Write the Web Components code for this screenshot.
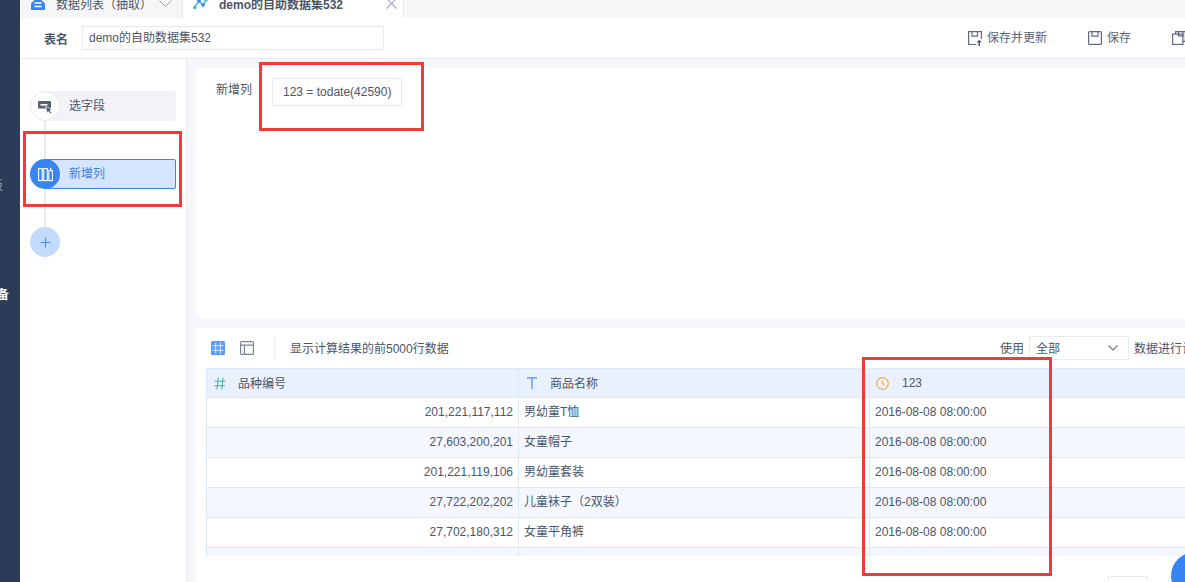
<!DOCTYPE html>
<html lang="zh">
<head>
<meta charset="utf-8">
<title>demo的自助数据集532</title>
<style>
  html, body { margin: 0; height: 582px; overflow: hidden; background: #fff; }
  body { font: 12px "Liberation Sans", "Noto Sans CJK SC", sans-serif; color: #4c5568; }
</style>
</head>
<body>
<bi-app></bi-app>
<script>
// --- Helper to define components quickly ---
function createComponent(tag, template) {
  customElements.define(tag, class extends HTMLElement {
    constructor() {
      super();
      this.attachShadow({ mode: 'open' }).innerHTML = template;
    }
  });
}

const Icons = {
  home: `<svg width="14" height="14" viewBox="0 0 14 14"><path d="M4 3.500H10L14 7.500V14H0V7.500Z" fill="#3685f2"/><path d="M3.500 7h7M3.500 10.500h7" stroke="#fff" stroke-width="1.300"/></svg>`,
  chart: `<svg width="15" height="14" viewBox="0 0 15 14" fill="none"><path d="M1.500 11.500 6 5 10 9 13.500 3.500" stroke="#3fb8d8" stroke-width="1.500"/><circle cx="1.800" cy="11.500" r="1.800" fill="#35c2b0"/><circle cx="6" cy="5" r="1.800" fill="#3685f2"/><circle cx="10" cy="9" r="1.800" fill="#3685f2"/><circle cx="13.200" cy="3.500" r="1.800" fill="#35c2b0"/></svg>`,
  chevron: `<svg width="13" height="7" viewBox="0 0 13 7" fill="none"><path d="M.5.5 6.500 6.500 12.500.5" stroke="#9aa2b1"/></svg>`,
  close: `<svg width="11" height="11" viewBox="0 0 11 11" fill="none"><path d="M.5.5l10 10M10.500.5l-10 10" stroke="#a3aab7" stroke-width="1.100"/></svg>`,
  saveUpdate: `<svg width="14" height="15" viewBox="0 0 14 15" fill="none"><path d="M8.500 13.500H.6V.6h12.800V8" stroke="#5f6a7e" stroke-width="1.200"/><path d="M4 1v4.200h5.500V1" stroke="#5f6a7e" stroke-width="1.200"/><path d="M11.200 15v-5" stroke="#3f4a60" stroke-width="1.400"/><path d="M8.700 11.500l2.500-2.700 2.500 2.700z" fill="#3f4a60"/></svg>`,
  save: `<svg width="14" height="14" viewBox="0 0 14 14" fill="none"><rect x=".6" y=".6" width="12.800" height="12.800" rx="1" stroke="#5f6a7e" stroke-width="1.200"/><path d="M4 1v4.200h6V1" stroke="#5f6a7e" stroke-width="1.200"/></svg>`,
  saveAs: `<svg width="14" height="14" viewBox="0 0 14 14" fill="none"><path d="M3.600 3V.6h9.800v9.800H11" stroke="#5f6a7e" stroke-width="1.200"/><rect x=".6" y="3.100" width="10.300" height="10.300" stroke="#5f6a7e" stroke-width="1.200"/><path d="M6.500 1v3.800h4.500V1" stroke="#5f6a7e" stroke-width="1.200"/></svg>`,
  pick: `<svg width="16" height="14" viewBox="0 0 16 14" style="margin-top:2px"><rect x="1" y="1" width="13" height="7.500" rx=".8" fill="#5a6273"/><rect x="3.500" y="4" width="7" height="1.600" fill="#fff"/><path d="M8.500 6.500 15 9.500l-2.300 1 2 2.200-1.200 1-2-2.200-1 1.800z" fill="#3f4a60" stroke="#fff" stroke-width=".7"/></svg>`,
  columns: `<svg width="15" height="15" viewBox="0 0 15 15" fill="none" stroke="#fff" stroke-width="1.100"><rect x=".6" y="1.600" width="3.600" height="12"/><rect x="5.700" y="1.600" width="3.600" height="12"/><rect x="10.800" y="3.600" width="3.600" height="10"/><path d="M12.600 .8v2.800" stroke-width="1.400"/></svg>`,
  plus: `<svg width="11" height="11" viewBox="0 0 11 11" fill="none"><path d="M5.500.5v10M.5 5.500h10" stroke="#4a8eed" stroke-width="1.100"/></svg>`,
  grid: `<svg width="14" height="14" viewBox="0 0 14 14"><rect width="14" height="14" rx="1.500" fill="#5b9cf6"/><path d="M4.700 1.500v11M9.300 1.500v11M1.500 4.700h11M1.500 9.300h11" stroke="#fff" stroke-width=".8"/></svg>`,
  layout: `<svg width="14" height="14" viewBox="0 0 14 14" fill="none" stroke="#7e8696" stroke-width="1.200"><rect x=".6" y=".6" width="12.800" height="12.800" rx="1"/><path d="M.6 4.200h12.800M4.400 4.200v9.200"/></svg>`,
  hash: `<svg width="12" height="13" viewBox="0 0 12 13" fill="none" stroke="#3cb9a6" stroke-width="1.100"><path d="M4.300.5 3 12.500M9 .5 7.700 12.500M.8 4.300h10.600M.4 8.700h10.600"/></svg>`,
  text: `<svg width="10" height="12" viewBox="0 0 10 12" fill="none" stroke="#3f8cf0" stroke-width="1.200"><path d="M0 .8h10M5 .8V12"/></svg>`,
  clock: `<svg width="13" height="13" viewBox="0 0 13 13" fill="none" stroke="#f5ab4e" stroke-width="1.200"><circle cx="6.500" cy="6.500" r="5.800"/><path d="M6.500 3.400v3.300l2.300 1"/></svg>`,
  select: `<svg width="10" height="6" viewBox="0 0 10 6" fill="none"><path d="M.5.500 5 5 9.500.5" stroke="#6b7485" stroke-width="1.100"/></svg>`,
};

// --- Left rail, cut off by the window ---
createComponent('bi-rail', `
  <style>
    :host { display:flex; flex-direction:column; align-items:flex-end; width:20px; flex:none; overflow:hidden;
      background:#2c3c58; box-sizing:border-box; padding-top:180px; color:#9ba6b6; line-height:13px; white-space:nowrap; }
    .a { margin-right:17px; }
    .b { margin-right:11px; margin-top:96px; color:#fff; font-weight:bold; }
  </style>
  <div class="a">仪表板</div>
  <div class="b">数据准备</div>
`);

// --- Tabs, top part is scrolled away ---
createComponent('bi-tabs', `
  <style>
    :host { display:flex; height:18px; flex:none; overflow:hidden; background:#f5f6f8; align-items:flex-end; color:#4c5568; }
    .tab { height:30px; flex:none; display:flex; align-items:center; box-sizing:border-box; }
    .one { width:163px; padding-left:11px; border-right:1px solid #e8eaed; }
    .two { width:221px; padding-left:10px; background:#fff; border-right:1px solid #e8eaed; font-weight:bold; }
    .one span { margin-left:11px; width:103px; }
    .two span { margin-left:11px; width:167px; }
  </style>
  <div class="tab one">${Icons.home}<span>数据列表（抽取）</span>${Icons.chevron}</div>
  <div class="tab two">${Icons.chart}<span>demo的自助数据集532</span>${Icons.close}</div>
`);

// --- Name bar with the save actions ---
createComponent('bi-namebar', `
  <style>
    :host { display:grid; grid-template-columns:948px 1fr; height:41px; flex:none; box-sizing:border-box;
      border-bottom:1px solid #e8eaed; background:#fff; overflow:hidden; }
    .left, .right { display:flex; align-items:center; white-space:nowrap; }
    .left { padding-left:24px; }
    label { font-weight:bold; width:38px; }
    .input { width:302px; height:24px; box-sizing:border-box; border:1px solid #e8eaed; padding-left:6px; line-height:22px; }
    .act { display:flex; align-items:center; gap:5px; margin-right:41px; color:#5a6376; }
    .act svg { flex:none; }
    .act span { margin-top:-4px; }
  </style>
  <div class="left"><label>表名</label><div class="input">demo的自助数据集532</div></div>
  <div class="right">
    <div class="act">${Icons.saveUpdate}<span>保存并更新</span></div>
    <div class="act">${Icons.save}<span>保存</span></div>
    <div class="act">${Icons.saveAs}</div>
  </div>
`);

// --- Steps column ---
createComponent('bi-steps', `
  <style>
    :host { display:block; width:167px; flex:none; box-sizing:border-box; padding:32px 0 0 10px;
      background:#fff; border-right:1px solid #e8eaed; }
    .line { width:2px; height:38px; margin-left:14px; background:#e8ebf0; }
    .step { display:flex; height:30px; width:146px; }
    .dot { width:30px; height:30px; flex:none; border-radius:50%; box-sizing:border-box; display:flex;
      align-items:center; justify-content:center; position:relative; z-index:1; }
    .pill { flex:1; margin-left:-15px; box-sizing:border-box; padding-left:24px; line-height:30px; background:#f2f3f7; border-radius:0 2px 2px 0; }
    .idle .dot { background:#fff; border:1px solid #e8ebf0; }
    .on .dot { background:#3685f2; }
    .on .pill { background:#d4e5fd; border:1px solid #3685f2; padding-left:23px; line-height:28px; color:#3f7fe0; border-radius:2px; }
    .add .dot { background:#c3dafb; }
  </style>
  <div class="step idle"><div class="dot">${Icons.pick}</div><div class="pill">选字段</div></div>
  <div class="line"></div>
  <div class="step on"><div class="dot">${Icons.columns}</div><div class="pill">新增列</div></div>
  <div class="line"></div>
  <div class="step add"><div class="dot">${Icons.plus}</div></div>
`);

// --- Formula panel ---
createComponent('bi-formula', `
  <style>
    :host { display:flex; height:250px; flex:none; background:#fff; box-sizing:border-box; padding:10px 0 0 20px; }
    label { width:56px; line-height:24px; }
    .chip { height:28px; box-sizing:border-box; border:1px solid #e8eaed; padding:0 10px; line-height:26px; }
  </style>
  <label>新增列</label>
  <div class="chip">123 = todate(42590)</div>
`);

// --- Preview table ---
customElements.define('bi-preview', class extends HTMLElement {
  constructor() {
    super();
    this.attachShadow({ mode: 'open' });
  }

  connectedCallback() {
    const rows = [
      ['201,221,117,112', '男幼童T恤'],
      ['27,603,200,201', '女童帽子'],
      ['201,221,119,106', '男幼童套装'],
      ['27,722,202,202', '儿童袜子（2双装）'],
      ['27,702,180,312', '女童平角裤'],
    ];
    const date = '2016-08-08 08:00:00';
    const body = rows.map((r, i) => `
      <div class="c num ${i % 2 ? 'alt' : ''}">${r[0]}</div>
      <div class="c ${i % 2 ? 'alt' : ''}">${r[1]}</div>
      <div class="c ${i % 2 ? 'alt' : ''}">${date}</div>
    `).join('');

    this.shadowRoot.innerHTML = `
      <style>
        :host { display:block; flex:1; min-height:0; background:#fff; overflow:hidden; }
        .bar { display:grid; grid-template-columns:804px 1fr; height:40px; white-space:nowrap; overflow:hidden; }
        .left, .right { display:flex; align-items:center; }
        .left { padding-left:15px; }
        .left svg + svg { margin-left:15px; }
        .bar span { margin-top:-2px; }
        .sep { width:1px; height:20px; background:#eceef1; margin:0 15px 0 20px; }
        .sel { width:100px; height:24px; flex:none; margin:0 5px; box-sizing:border-box; border:1px solid #e8eaed; padding:0 10px 0 6px;
          display:flex; align-items:center; justify-content:space-between; }
        .table { display:grid; grid-template-columns:312px 351px 1fr; margin-left:10px; height:188px; overflow:hidden;
          border-left:1px solid #dce9fa; border-top:1px solid #dce9fa; box-sizing:border-box; }
        .c { height:30px; box-sizing:border-box; border-right:1px solid #dce9fa; border-bottom:1px solid #dce9fa;
          padding:0 5px; line-height:29px; white-space:nowrap; overflow:hidden; }
        .c:nth-child(3n) { border-right:0; }
        .h { height:29px; background:#e8f1fc; display:flex; align-items:center; line-height:normal; padding-left:7px; }
        .ic { width:24px; flex:none; display:flex; }
        .t { margin-top:-2px; }
        .h:nth-child(2) { padding-left:8px; }
        .h:nth-child(2) .ic { width:23px; }
        .h:nth-child(3) { padding-left:6px; }
        .num { text-align:right; }
        .alt { background:#f4f8fe; }
        .pager { display:flex; margin:20px 0 0 912px; gap:20px; }
        .pager div { width:40px; height:28px; flex:none; box-sizing:border-box; border:1px solid #e8eaed; border-radius:2px; }
      </style>
      <div class="bar">
        <div class="left">${Icons.grid}${Icons.layout}<div class="sep"></div><span>显示计算结果的前5000行数据</span></div>
        <div class="right"><span>使用</span><div class="sel"><span>全部</span>${Icons.select}</div><span>数据进行计算</span></div>
      </div>
      <div class="table">
        <div class="c h"><span class="ic">${Icons.hash}</span><span class="t">品种编号</span></div>
        <div class="c h"><span class="ic">${Icons.text}</span><span class="t">商品名称</span></div>
        <div class="c h"><span class="ic">${Icons.clock}</span><span style="margin-left:2px">123</span></div>
        ${body}
        <div class="c alt"></div><div class="c alt"></div><div class="c alt"></div>
      </div>
      <div class="pager"><div></div><div></div></div>
    `;
  }
});

// --- Red annotation frame, lies over the screenshot ---
customElements.define('bi-mark', class extends HTMLElement {
  constructor() {
    super();
    const shadow = this.attachShadow({ mode: 'open' });
    shadow.innerHTML = `<style>:host { display:block; position:absolute; box-sizing:border-box; border:3px solid #f33a3a; pointer-events:none; }</style>`;
  }

  connectedCallback() {
    const [x, y, w, h] = this.getAttribute('box').split(',');
    Object.assign(this.style, { left: x + 'px', top: y + 'px', width: w + 'px', height: h + 'px' });
  }
});

// floating help button, cut by the window corner
createComponent('bi-fab', `
  <style>:host { display:block; position:absolute; left:1171px; top:552px; width:48px; height:48px; border-radius:50%; background:#3685f2; }</style>
`);

// --- Page ---
createComponent('bi-app', `
  <style>
    :host { display:flex; position:relative; width:1185px; height:582px; overflow:hidden; }
    .col { flex:1; min-width:0; display:flex; flex-direction:column; }
    .work { flex:1; min-height:0; display:flex; }
    .main { flex:1; min-width:0; display:flex; flex-direction:column; gap:10px; background:#f5f7fa; padding:9px 0 0 9px; }
  </style>
  <bi-rail></bi-rail>
  <div class="col">
    <bi-tabs></bi-tabs>
    <bi-namebar></bi-namebar>
    <div class="work">
      <bi-steps></bi-steps>
      <div class="main">
        <bi-formula></bi-formula>
        <bi-preview></bi-preview>
      </div>
    </div>
  </div>
  <bi-mark box="259,62,165,69"></bi-mark>
  <bi-mark box="23,131,159,76"></bi-mark>
  <bi-mark box="862,357,190,219"></bi-mark>
  <bi-fab></bi-fab>
`);
</script>
</body>
</html>
